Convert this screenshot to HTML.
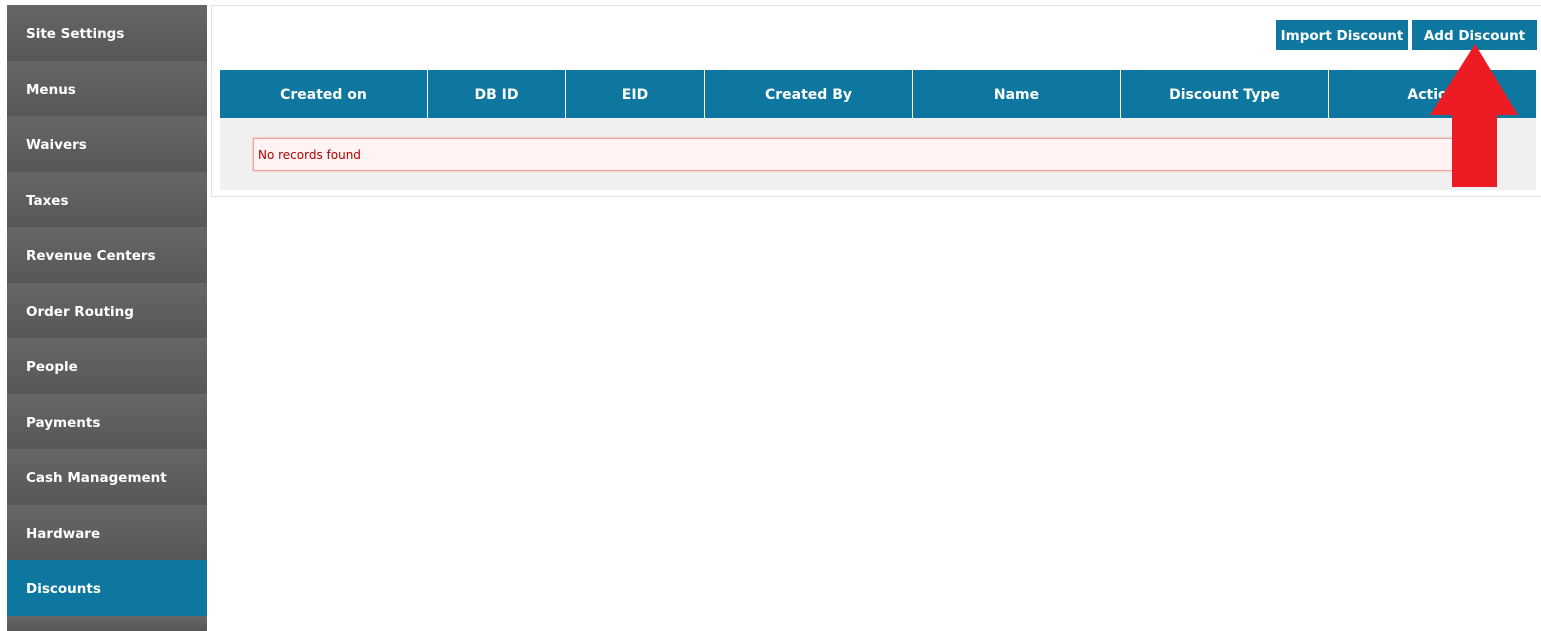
<!DOCTYPE html>
<html><head><style>
html,body{margin:0;width:1541px;height:631px;overflow:hidden;}
body{background:#fff;position:relative;font-family:"DejaVu Sans",Verdana,sans-serif;}
.side{position:absolute;left:7px;top:5px;width:200px;}
.item{height:55.5px;line-height:58px;padding-left:19px;color:#fff;font-weight:bold;font-size:13.5px;background:linear-gradient(#666,#575757);box-sizing:border-box;}
.item.act{background:#0d77a0;}
.panel{position:absolute;left:211px;top:5px;width:1340px;height:192px;border:1px solid #e3e3e3;box-sizing:border-box;}
.btn{position:absolute;top:20px;height:30px;background:#0d77a0;color:#fff;font-weight:bold;font-size:13.5px;line-height:32px;text-align:center;}
.th{position:absolute;top:70px;height:48px;background:#0d77a0;color:#fff;font-weight:bold;font-size:14px;line-height:51px;text-align:center;border-right:1px solid #fff;box-sizing:border-box;}
</style></head><body>
<div class="side">
<div class="item">Site Settings</div><div class="item">Menus</div><div class="item">Waivers</div><div class="item">Taxes</div><div class="item">Revenue Centers</div><div class="item">Order Routing</div><div class="item">People</div><div class="item">Payments</div><div class="item">Cash Management</div><div class="item">Hardware</div><div class="item act">Discounts</div><div class="item" style="height:15px"></div>
</div>
<div class="panel"></div>
<div class="btn" style="left:1276px;width:132px">Import Discount</div>
<div class="btn" style="left:1412px;width:125px">Add Discount</div>
<div style="position:absolute;left:220px;top:118px;width:1316px;height:72px;background:#f0f0f0"></div>
<div class="th" style="left:220px;width:208px">Created on</div>
<div class="th" style="left:428px;width:138px">DB ID</div>
<div class="th" style="left:566px;width:139px">EID</div>
<div class="th" style="left:705px;width:208px">Created By</div>
<div class="th" style="left:913px;width:208px">Name</div>
<div class="th" style="left:1121px;width:208px">Discount Type</div>
<div class="th" style="left:1329px;width:207px;border-right:0">Action</div>
<div style="position:absolute;left:253px;top:138px;width:1230px;height:33px;background:#fff3f3;border:1px solid #f7a0a0;box-sizing:border-box;box-shadow:0 0 2px #f7a0a0;color:#b00000;font-size:12px;line-height:33px;padding-left:4px;">No records found</div>
<svg style="position:absolute;left:0;top:0" width="1541" height="631"><polygon points="1475,44 1518,115 1497,115 1497,187 1452,187 1452,115 1430,115" fill="#ed1c24"/></svg>
</body></html>
